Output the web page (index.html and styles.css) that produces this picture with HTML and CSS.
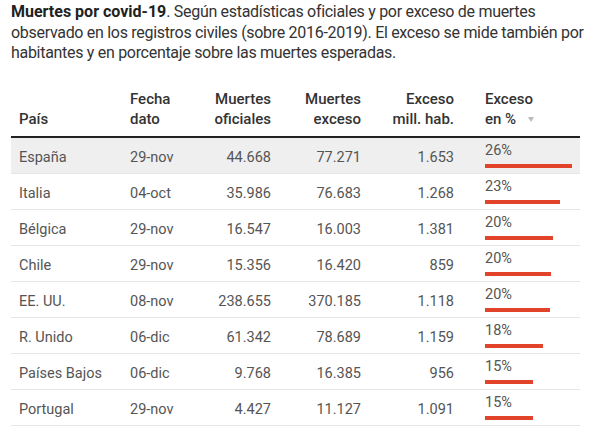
FILE: index.html
```html
<!DOCTYPE html>
<html lang="es">
<head>
<meta charset="utf-8">
<title>Muertes por covid-19</title>
<link rel="stylesheet" href="styles.css">
</head>
<body>
<p class="intro"><strong>Muertes por covid-19</strong>. Según estadísticas oficiales y por exceso de muertes observado en los registros civiles (sobre 2016-2019). El exceso se mide también por habitantes y en porcentaje sobre las muertes esperadas.</p>
<table class="data">
  <thead>
    <tr>
      <th class="c-pais">País</th>
      <th class="c-fecha">Fecha<br>dato</th>
      <th class="c-num c-of">Muertes<br>oficiales</th>
      <th class="c-num c-ex">Muertes<br>exceso</th>
      <th class="c-num c-mill">Exceso<br>mill. hab.</th>
      <th class="c-pct">Exceso<br>en %<span class="sort"></span></th>
    </tr>
  </thead>
  <tbody>
    <tr class="hl"><td>España</td><td>29-nov</td><td class="c-num">44.668</td><td class="c-num">77.271</td><td class="c-num">1.653</td><td class="c-pct">26%<div class="bar" style="width:87px"></div></td></tr>
    <tr><td>Italia</td><td>04-oct</td><td class="c-num">35.986</td><td class="c-num">76.683</td><td class="c-num">1.268</td><td class="c-pct">23%<div class="bar" style="width:75px"></div></td></tr>
    <tr><td>Bélgica</td><td>29-nov</td><td class="c-num">16.547</td><td class="c-num">16.003</td><td class="c-num">1.381</td><td class="c-pct">20%<div class="bar" style="width:68px"></div></td></tr>
    <tr><td>Chile</td><td>29-nov</td><td class="c-num">15.356</td><td class="c-num">16.420</td><td class="c-num">859</td><td class="c-pct">20%<div class="bar" style="width:66px"></div></td></tr>
    <tr><td>EE. UU.</td><td>08-nov</td><td class="c-num">238.655</td><td class="c-num">370.185</td><td class="c-num">1.118</td><td class="c-pct">20%<div class="bar" style="width:65px"></div></td></tr>
    <tr><td>R. Unido</td><td>06-dic</td><td class="c-num">61.342</td><td class="c-num">78.689</td><td class="c-num">1.159</td><td class="c-pct">18%<div class="bar" style="width:58px"></div></td></tr>
    <tr><td>Países Bajos</td><td>06-dic</td><td class="c-num">9.768</td><td class="c-num">16.385</td><td class="c-num">956</td><td class="c-pct">15%<div class="bar" style="width:48px"></div></td></tr>
    <tr><td>Portugal</td><td>29-nov</td><td class="c-num">4.427</td><td class="c-num">11.127</td><td class="c-num">1.091</td><td class="c-pct">15%<div class="bar" style="width:48px"></div></td></tr>
  </tbody>
</table>
</body>
</html>
```
FILE: styles.css
```css
* { box-sizing: border-box; }
html, body { margin: 0; padding: 0; background: #fff; }
body {
  padding: 2px 11px 0 11px;
  font-family: Roboto, "Liberation Sans", sans-serif;
  color: #333;
}
.intro {
  margin: 0;
  font-size: 16px;
  line-height: 20.5px;
  color: #333;
  width: 586px;
  letter-spacing: -0.3px;
}
.intro strong { font-weight: 700; color: #222; letter-spacing: 0; }

.data {
  margin-top: 21px;
  width: 569px;
  border-collapse: separate;
  border-spacing: 0;
  table-layout: fixed;
}
.data th {
  font-weight: 500;
  font-size: 15px;
  line-height: 20px;
  color: #333;
  text-align: left;
  vertical-align: bottom;
  padding: 4px 8px 7px 8px;
  border-bottom: 2px solid #222;
}
.c-pais { width: 111px; }
.c-fecha { width: 78px; }
.c-of { width: 79px; }
.c-ex { width: 90px; }
.c-mill { width: 93px; }
.data th.c-num, .data td.c-num { text-align: right; }
.data th.c-pct, .data td.c-pct { padding-left: 23px; }

.data td {
  font-size: 14.5px;
  line-height: 20px;
  color: #555;
  height: 36px;
  vertical-align: top;
  padding: 10px 8px 0 8px;
  border-bottom: 1px solid #e6e6e6;
  white-space: nowrap;
}
.data td.c-pct { padding-top: 3px; }
.data tr.hl td { background: #efefef; }
.bar {
  height: 4px;
  margin-top: 3px;
  background: #e2432b;
}
.sort {
  display: inline-block;
  margin-left: 12px;
  width: 0;
  height: 0;
  border-left: 3px solid transparent;
  border-right: 3px solid transparent;
  border-top: 5px solid #bbb;
  vertical-align: 2px;
}
```
